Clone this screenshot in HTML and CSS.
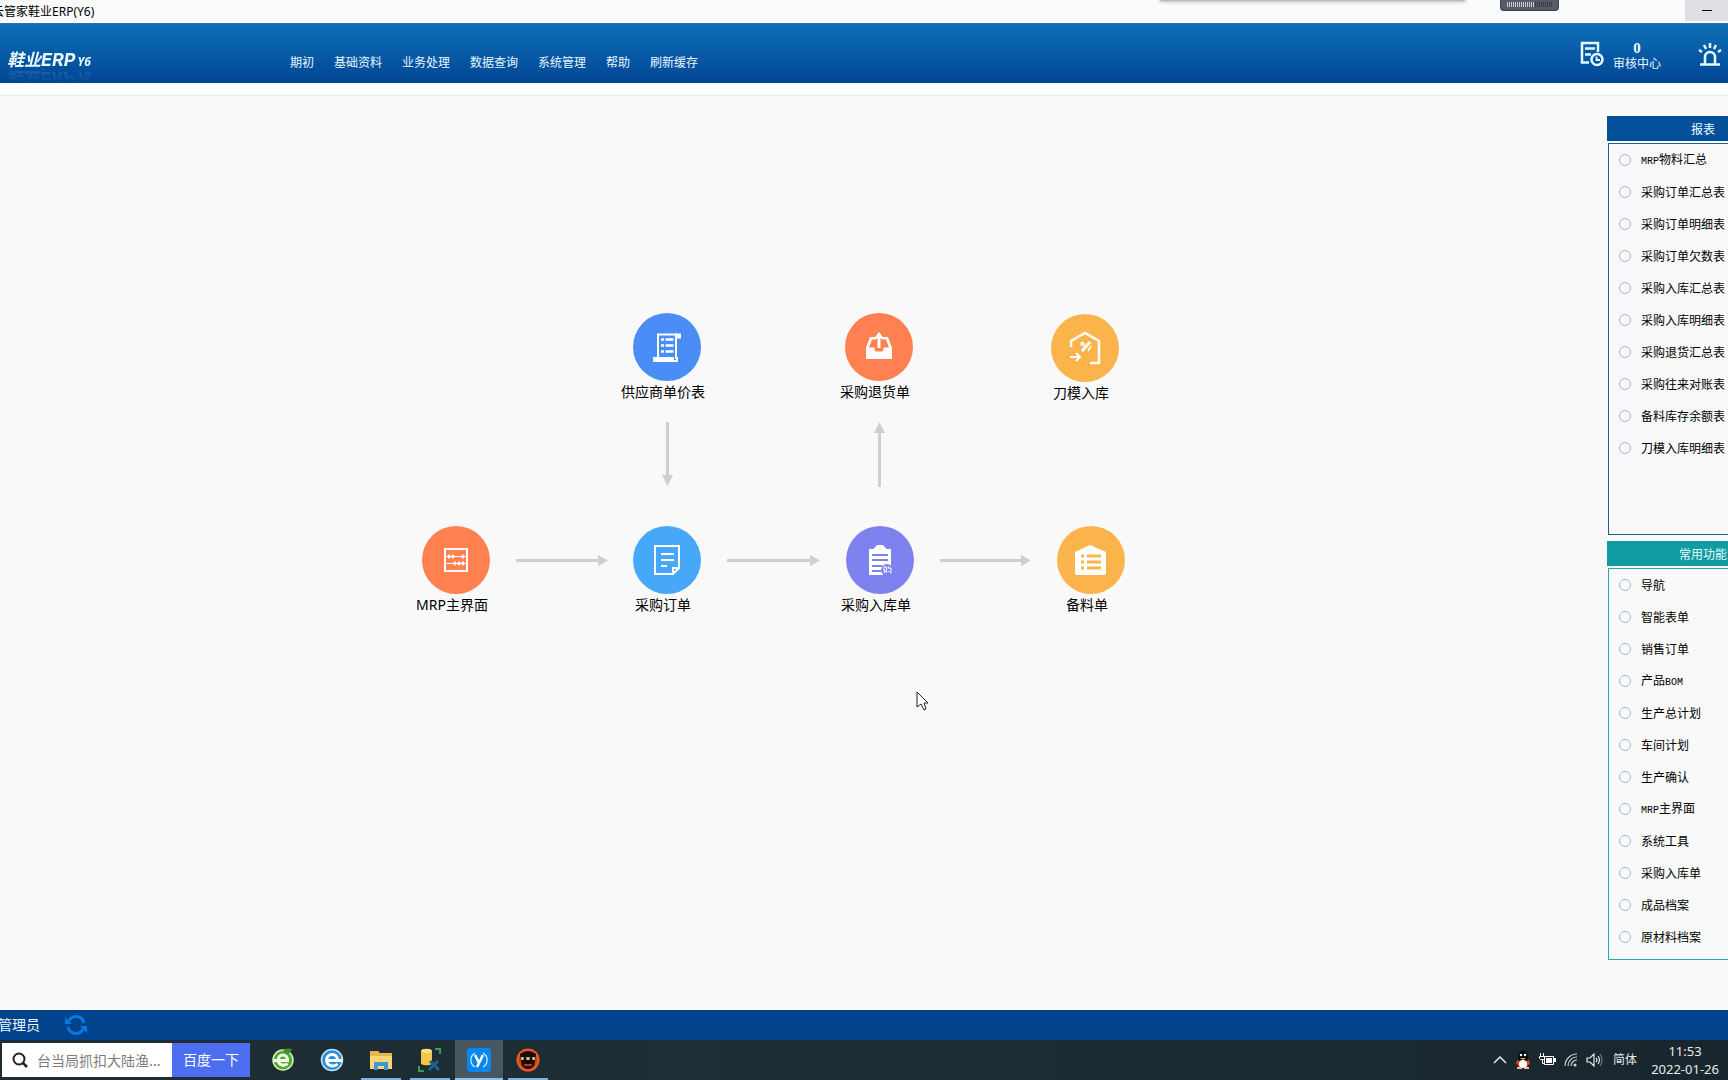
FILE: index.html
```html
<!DOCTYPE html>
<html lang="zh-CN">
<head>
<meta charset="utf-8">
<title>云管家鞋业ERP(Y6)</title>
<link rel="stylesheet" href="styles.css">
</head>
<body>
<div class="titlebar">
  <h1 class="window-title">云管家鞋业ERP(Y6)</h1>
  <div class="capture-shadow"></div>
  <div class="capture-handle"></div>
  <button class="minimize" aria-label="最小化"><span class="dash"></span></button>
</div>

<header class="header">
  <div class="logo"><span class="logo-art"><span class="logo-main">鞋业<span class="logo-erp">ERP</span></span><span class="logo-ver">Y6</span></span></div>
  <nav class="menu">
    <a href="#">期初</a><a href="#">基础资料</a><a href="#">业务处理</a><a href="#">数据查询</a><a href="#">系统管理</a><a href="#">帮助</a><a href="#">刷新缓存</a>
  </nav>
  <div class="header-tools">
    <button class="audit">
      <svg width="24" height="26" viewBox="0 0 24 26" fill="none" stroke="#e4fbff" stroke-width="2.500"><path d="M9 21.500H2V2h16v9M5 7.500h10M5 13.500h6"/><circle cx="17" cy="18.500" r="5.500"/><path d="M16.500 15.500v3.500h3.500" stroke-width="1.800"/></svg>
      <span class="audit-text"><b>0</b><span>审核中心</span></span>
    </button>
    <button class="alarm" aria-label="预警">
      <svg width="24" height="24" viewBox="0 0 24 24" fill="none" stroke="#e4fbff" stroke-width="2.500"><path d="M2 21.500h20M7 21v-7a5 5 0 0 1 10 0v7M12 0v5M6 2l2 4M18 2l-2 4M1 7l3 2M23 7l-3 2"/></svg>
    </button>
  </div>
</header>

<main class="workspace">
  <section class="flow" aria-label="采购流程">
    <svg class="arrows" width="1140" height="620" viewBox="0 0 1140 620" aria-hidden="true">
      <g stroke="#cfcfcf" stroke-width="3" fill="none">
        <path d="M667.500 339v54M879.500 350v54M516 477.500h84M727 477.500h84M940 477.500h84"/>
      </g>
      <g fill="#cfcfcf">
        <path d="M662 392h11l-5.500 11zM874 350h11l-5.500-11zM598 472v11l10-5.500zM810 472v11l10-5.500zM1021 472v11l10-5.500z"/>
      </g>
    </svg>
    <a href="#" class="node price">
      <span class="disc blue"><svg width="32" height="34" viewBox="0 0 32 34" fill="none" stroke="#fff" stroke-width="2"><path d="M7 28V4.500h18V29"/><path d="M24 3.500h6v5h-4z" fill="#fff" stroke="none"/><path d="M3 28h19v3H3z" fill="#fff"/><path d="M21 31h5v-4"/><path d="M10 9.500h3M14.500 9.500h8M10 15.500h3M14.500 15.500h8M10 21.500h3M14.500 21.500h8" stroke-width="2.500"/></svg></span>
      <span class="label">供应商单价表</span>
    </a>
    <a href="#" class="node return">
      <span class="disc orange"><svg width="30" height="30" viewBox="0 0 30 30"><path d="M2 15.500 6 5h6v2.500H8L5 15.500h5.500v2a2 2 0 0 0 2 2h5a2 2 0 0 0 2-2v-2H25l-3-8h-4V5h6l4 10.500V27H2z" fill="#fff"/><path d="M15 16V3" fill="none" stroke="#fff" stroke-width="3"/><path d="M10 6.500 15 0l5 6.500z" fill="#fff"/></svg></span>
      <span class="label">采购退货单</span>
    </a>
    <a href="#" class="node knife">
      <span class="disc gold"><svg width="34" height="36" viewBox="0 0 34 36" fill="none" stroke="#fff" stroke-width="2.500"><path d="M3 17v-6L17 3l14 8v22h-9"/><path d="M2 27h10M8 23l4 4-4 4" stroke-width="2"/><path d="m22 12-8 9" stroke-width="3"/><circle cx="14.500" cy="14" r="1.500" stroke-width="1.500"/><path d="m20 21 3-5" stroke-width="1.500"/></svg></span>
      <span class="label">刀模入库</span>
    </a>
    <a href="#" class="node mrp">
      <span class="disc orange"><svg width="26" height="28" viewBox="0 0 26 28" fill="none" stroke="#fff" stroke-width="2"><path d="M2 3h22v22H2z"/><path d="M3 10.500h20M3 17.500h20" stroke-width="1"/><path d="m4 10.500 2-2.500 2 2.500-2 2.500zM8 10.500l2-2.500 2 2.500-2 2.500zM18 10.500l2-2.500 2 2.500-2 2.500zM10 17.500l2-2.500 2 2.500-2 2.500zM14 17.500l2-2.500 2 2.500-2 2.500zM18 17.500l2-2.500 2 2.500-2 2.500z" fill="#fff" stroke="none"/></svg></span>
      <span class="label">MRP主界面</span>
    </a>
    <a href="#" class="node order">
      <span class="disc sky"><svg width="28" height="32" viewBox="0 0 28 32" fill="none" stroke="#fff" stroke-width="2"><path d="M2 2h24v22l-6 6H2zM26 24h-6v6M8 10h13M8 16h13M8 22h6"/></svg></span>
      <span class="label">采购订单</span>
    </a>
    <a href="#" class="node stockin">
      <span class="disc violet"><svg width="26" height="34" viewBox="0 0 26 34"><path d="M2 6h5c0-2 2-2 3-4h6c1 2 3 2 3 4h5v26H2z" fill="#fff"/><path d="M5 12h16M5 17h16M5 23h10M5 28h9" stroke="#7d82ee" stroke-width="2"/><circle cx="20" cy="27" r="6" fill="#7d82ee"/><path d="M17 24h2.500v4H17zM17 30l1-2M20 30l-1-2M21.500 23.500l-.5 2M21 25h3v5h-1M21 28.500h1.500" stroke="#fff" stroke-width="1" fill="none"/></svg></span>
      <span class="label">采购入库单</span>
    </a>
    <a href="#" class="node material">
      <span class="disc gold"><svg width="34" height="34" viewBox="0 0 34 34"><path d="M1 9 16 2l16 7v21a2 2 0 0 1-2 2H3a2 2 0 0 1-2-2z" fill="#fff"/><path d="M7 13h3M13 13h14M7 19h3M13 19h14M7 25h3M13 25h14" stroke="#fdb54c" stroke-width="3"/></svg></span>
      <span class="label">备料单</span>
    </a>
    <svg class="cursor" width="13" height="20" viewBox="0 0 13 20" aria-hidden="true"><path d="M1 1v15l4-3 3 6 2-1-2-6h4z" fill="#fff" stroke="#222"/></svg>
  </section>

  <aside class="side">
    <section class="panel reports">
      <h2>报表</h2>
      <ul>
        <li><a href="#"><span class="latin">MRP</span>物料汇总</a></li><li><a href="#">采购订单汇总表</a></li><li><a href="#">采购订单明细表</a></li><li><a href="#">采购订单欠数表</a></li><li><a href="#">采购入库汇总表</a></li><li><a href="#">采购入库明细表</a></li><li><a href="#">采购退货汇总表</a></li><li><a href="#">采购往来对账表</a></li><li><a href="#">备料库存余额表</a></li><li><a href="#">刀模入库明细表</a></li>
      </ul>
    </section>
    <section class="panel common">
      <h2>常用功能</h2>
      <ul>
        <li><a href="#">导航</a></li><li><a href="#">智能表单</a></li><li><a href="#">销售订单</a></li><li><a href="#">产品<span class="latin">BOM</span></a></li><li><a href="#">生产总计划</a></li><li><a href="#">车间计划</a></li><li><a href="#">生产确认</a></li><li><a href="#"><span class="latin">MRP</span>主界面</a></li><li><a href="#">系统工具</a></li><li><a href="#">采购入库单</a></li><li><a href="#">成品档案</a></li><li><a href="#">原材料档案</a></li>
      </ul>
    </section>
  </aside>
</main>

<div class="statusbar">
  <span>管理员</span>
  <button aria-label="刷新"><svg width="22" height="22" viewBox="0 0 22 22" fill="none" stroke="#0a78e0" stroke-width="3"><path d="M4 7a8 8 0 0 1 15 2M18 15a8 8 0 0 1-15-2"/><path d="M0 3v7h7zM22 19v-7h-7z" fill="#0a78e0" stroke="none"/></svg></button>
</div>

<footer class="taskbar">
  <form class="search">
    <svg width="16" height="18" viewBox="0 0 16 18" fill="none" stroke="#222" stroke-width="2"><circle cx="7" cy="8" r="5.500"/><path d="m11 12 4 4" stroke-width="2.500"/></svg>
    <input type="text" aria-label="搜索" placeholder="台当局抓扣大陆渔...">
    <button type="button">百度一下</button>
  </form>
  <div class="apps">
    <button class="app" aria-label="360浏览器"><svg width="24" height="24" viewBox="0 0 24 24"><circle cx="12" cy="12" r="10" fill="#55a92f" stroke="#d9f0c4" stroke-width="1.500"/><path d="M3 12.500h13.500c0-7.500-9-7-9.500-.5.500 6 7 6 9.500 3.500" fill="none" stroke="#f2ffe8" stroke-width="3"/><path d="M12 3c2-3 6-3 9-2-1 3-3 5-6 5z" fill="#3f9425"/></svg></button>
    <button class="app" aria-label="浏览器"><svg width="24" height="24" viewBox="0 0 24 24"><circle cx="12" cy="12" r="10.500" fill="#2a8fdc" stroke="#c4e4fa" stroke-width="1.500"/><path d="M7 12.500h15M17.500 12c0-7.500-10.500-7.500-11 0 .5 7 8 7 11 4" fill="none" stroke="#fff" stroke-width="3"/></svg></button>
    <button class="app open" aria-label="文件资源管理器"><svg width="24" height="24" viewBox="0 0 24 24"><path d="M1 3h8l2 2h12v16H1z" fill="#e9b44c"/><path d="M1 8h22v13H1z" fill="#fbd775"/><path d="M5 22v-8h14v8h-4v-4H9v4z" fill="#3c97d3"/></svg></button>
    <button class="app open" aria-label="数据库工具"><svg width="24" height="24" viewBox="0 0 24 24"><path d="M3 3c0-3 11-3 11 0v12c0 3-11 3-11 0z" fill="#f3c74b"/><ellipse cx="8.500" cy="3" rx="5" ry="2" fill="#fbe08a"/><path d="M17 1h5v5M1 18v5h5" fill="none" stroke="#3d9b4d" stroke-width="2"/><path d="m11 22 9-9M12 13l9 9" stroke="#1d6296" stroke-width="3"/></svg></button>
    <button class="app open active" aria-label="云管家"><svg width="24" height="24" viewBox="0 0 24 24"><rect width="24" height="24" rx="3" fill="#0a87ee"/><path d="M8 5a8 8 0 0 0 0 14M16 5a8 8 0 0 1 0 14" fill="none" stroke="#d8efff" stroke-width="1.200"/><path d="m8 7 4 8 4-8M12.500 14l-2.500 5" fill="none" stroke="#fff" stroke-width="2.500"/></svg></button>
    <button class="app open" aria-label="录屏"><svg width="24" height="24" viewBox="0 0 24 24"><circle cx="12" cy="12" r="10.500" fill="#c8451a" stroke="#f0582a" stroke-width="2"/><path d="M4 6q8-6 16 0l-1 8q-1 7-7 7t-7-7z" fill="#1a0b07"/><path d="M5 10.500h14" stroke="#f6d7b5" stroke-width="2.500"/><circle cx="9" cy="10.500" r="1.500"/><circle cx="15" cy="10.500" r="1.500"/><path d="M8 17h8" stroke="#e8501c" stroke-width="1.500"/></svg></button>
  </div>
  <div class="tray">
    <svg width="14" height="8" viewBox="0 0 14 8" fill="none" stroke="#e6eaec" stroke-width="1.500"><path d="m1 7 6-6 6 6"/></svg>
    <svg width="16" height="18" viewBox="0 0 16 18"><ellipse cx="8" cy="6" rx="5" ry="6" fill="#0a0a0a"/><path d="M2 9q6 3 12 0l1 4-2 1c0 4-10 4-10 0l-2-1z" fill="#d8402f"/><ellipse cx="8" cy="13" rx="4" ry="4" fill="#fff"/><circle cx="6" cy="4" r="1.200" fill="#fff"/><circle cx="10" cy="4" r="1.200" fill="#fff"/><path d="M5 7h6l-3 2z" fill="#f5a623"/><path d="M2 17h5M9 17h5" stroke="#f5c08a" stroke-width="2"/></svg>
    <svg width="17" height="14" viewBox="0 0 17 14" fill="none" stroke="#fff"><path d="M5.500 3.500h9v8h-9z"/><path d="M7 5h6v5H7z" fill="#fff" stroke="none"/><path d="M16 5v4" stroke-width="2"/><path d="M1.500 0v3M4.500 0v3M.5 3.500h5v2l-1 1h-3l-1-1zM3.500 6v4.500h2"/></svg>
    <svg width="14" height="14" viewBox="0 0 14 14" fill="none" stroke="#c9d0d3" stroke-width="1.200"><path d="M1 13A12 12 0 0 1 13 1M4 13a9 9 0 0 1 9-9M7 13a6 6 0 0 1 6-6"/><circle cx="11" cy="12" r="1" fill="#fff"/></svg>
    <svg width="17" height="14" viewBox="0 0 17 14" fill="none" stroke="#e6eaec" stroke-width="1.200"><path d="M1 5h3l4-4v12L4 9H1zM10 5q2 2 0 4M12 3q3 4 0 8"/><path d="M14 1q4 6 0 12" stroke="#6a757a"/></svg>
    <span class="ime">简体</span>
    <time class="clock" datetime="2022-01-26T11:53"><span>11:53</span><span>2022-01-26</span></time>
  </div>
</footer>
</body>
</html>
```

FILE: styles.css
```css
* { box-sizing: border-box; }

html, body { height: 100%; }

body {
  margin: 0;
  display: flex;
  flex-direction: column;
  overflow: hidden;
  background: #f9f9fa;
  color: #000;
  font: 12px/16px "Noto Sans", "Noto Sans CJK SC", sans-serif;
}

button {
  padding: 0;
  border: 0;
  background: none;
  color: inherit;
  font: inherit;
}

a { color: inherit; text-decoration: none; }
svg { display: block; flex: none; }

/* Window title bar */
.titlebar {
  position: relative;
  flex: none;
  display: flex;
  justify-content: space-between;
  height: 23px;
  background: #fafbfc;
}
.window-title {
  margin: 0 0 0 -8px;
  font: 12px/23px "Noto Sans", "Noto Sans CJK SC", sans-serif;
}
.minimize {
  display: grid;
  place-items: center;
  width: 43px;
  height: 21px;
  background: #dedfe4;
}
.dash { width: 10px; height: 1px; background: #000; }
.capture-shadow {
  position: absolute;
  top: -4px;
  right: 263px;
  width: 305px;
  height: 5px;
  background: #bbb;
  box-shadow: 0 0 4px #999;
}
.capture-handle {
  position: absolute;
  top: 0;
  right: 169px;
  width: 59px;
  height: 11px;
  border: solid #3f434f;
  border-width: 0 1px 1px;
  border-radius: 0 0 4px 4px;
  background:
    repeating-linear-gradient(90deg, #c9ccd3 0 1px, #565b68 1px 2px) 6px 2px / 28px 5px no-repeat,
    repeating-linear-gradient(90deg, #3a3e49 0 1px, #565b68 1px 2px) 34px 2px / 18px 5px no-repeat,
    #565b68;
}

/* Header */
.header {
  flex: none;
  display: flex;
  height: 60px;
  border-top: 1px solid #3d6f98;
  background: linear-gradient(#0f70b8, #004594);
  color: #e8f8ff;
}
.logo {
  width: 290px;
  padding: 23px 0 0 7px;
  white-space: nowrap;
}
.logo-art {
  display: inline-block;
  line-height: 24px;
  -webkit-box-reflect: below -10px linear-gradient(transparent 30%, rgba(0, 0, 0, .2));
}
.logo-main { font: italic bold 17px/24px "Noto Sans CJK SC", sans-serif; }
.logo-erp { font-size: 18px; font-family: Inter, sans-serif; }
.logo-ver { margin-left: 2px; font: italic bold 12px/24px "Open Sans", sans-serif; }
.menu { display: flex; gap: 20px; padding-top: 31px; white-space: nowrap; }
.header-tools { display: flex; margin-left: auto; padding-right: 6px; gap: 37px; }
.audit { display: flex; gap: 9px; padding-top: 17px; align-items: flex-start; }
.audit-text { display: flex; flex-direction: column; line-height: 15px; }
.audit-text b { font: bold 15px/15px "Liberation Serif", serif; }
.alarm { display: flex; padding-top: 19px; align-items: flex-start; }

/* Workspace */
.workspace {
  flex: 1;
  display: flex;
  min-height: 0;
  border-top: 12px solid #fdfefe;
  box-shadow: inset 0 1px #e6eff3;
}
.flow { position: relative; flex: 1; margin-top: -12px; }
.arrows { position: absolute; left: 0; top: 0; }
.node {
  position: absolute;
  display: flex;
  flex-direction: column;
  align-items: center;
  width: 100px;
}
.disc {
  display: grid;
  place-items: center;
  width: 68px;
  height: 68px;
  border-radius: 50%;
}
.label {
  padding-right: 8px;
  font-size: 14px;
  line-height: 22px;
  white-space: nowrap;
}
.blue { background: #4b8df6; }
.orange { background: #ff8050; }
.gold { background: #fbb44c; }
.sky { background: #47a8f9; }
.violet { background: #7d82ee; }
.price { left: 617px; top: 230px; }
.return { left: 829px; top: 230px; }
.knife { left: 1035px; top: 231px; }
.mrp { left: 406px; top: 443px; }
.order { left: 617px; top: 443px; }
.stockin { left: 830px; top: 443px; }
.material { left: 1041px; top: 443px; }
.cursor { position: absolute; left: 916px; top: 608px; }

/* Side panels run past the right edge of the window */
.side {
  flex: none;
  display: flex;
  flex-direction: column;
  gap: 6px;
  width: 192px;
  margin: 21px -71px 0 0;
  font-family: "Noto Sans CJK SC", sans-serif;
}
.panel h2 {
  margin: 0 0 2px;
  padding-top: 1px;
  color: #e9fbff;
  font-size: 12px;
  font-weight: 400;
  line-height: 24px;
  text-align: center;
}
.panel ul {
  height: 392px;
  margin: 0 0 0 1px;
  padding: 0 0 0 10px;
  border: 1px solid;
  list-style: none;
}
.panel li { display: flex; align-items: center; gap: 10px; height: 32px; white-space: nowrap; }
.panel li::before {
  content: "";
  width: 10px;
  height: 10px;
  border: 1px solid #a9b4dc;
  border-radius: 50%;
}
.latin { font: 10px/16px "Liberation Mono", monospace; }
.reports h2 { background: #04509b; }
.reports ul { border-color: #14698a; }
.common h2 { background: #109ca0; }
.common ul { border-color: #2aa5a8; }

/* Status bar */
.statusbar {
  flex: none;
  display: flex;
  align-items: center;
  gap: 25px;
  height: 30px;
  background: #00428c;
  color: #e8f8ff;
  font-size: 14px;
}
.statusbar span { margin-left: -2px; }

/* Taskbar */
.taskbar {
  flex: none;
  display: flex;
  height: 40px;
  background: linear-gradient(90deg, #1f2b33, #1d2e35 40%, #1a262d);
  color: #e6eaec;
}
.search {
  display: flex;
  align-items: center;
  width: 248px;
  height: 34px;
  margin: 3px 0 0 2px;
  padding-left: 10px;
  background: #fff;
}
.search input {
  flex: 1;
  min-width: 0;
  padding: 0 0 0 9px;
  border: 0;
  background: none;
  font: 14px/20px "Noto Sans CJK SC", sans-serif;
}
.search input::placeholder { color: #7d7d7d; opacity: 1; }
.search button {
  width: 78px;
  height: 34px;
  background: #4e6ef2;
  color: #fff;
  font-size: 14px;
}
.apps { display: flex; gap: 5px; margin-left: 11px; }
.app {
  display: grid;
  place-items: center;
  width: 44px;
}
.app.open { background: linear-gradient(#7fb2dd, #7fb2dd) center bottom / 40px 2px no-repeat; }
.app.active {
  width: 48px;
  margin: 0 -2px;
  background: linear-gradient(#8fc0e8, #8fc0e8) center bottom / 48px 2px no-repeat, #47565f;
}
.tray { display: flex; align-items: center; gap: 8px; margin-left: auto; padding-right: 9px; }
.ime { margin-left: 2px; }
.clock { display: flex; flex-direction: column; align-items: center; margin-left: 6px; font-size: 13px; line-height: 18px; }
```
